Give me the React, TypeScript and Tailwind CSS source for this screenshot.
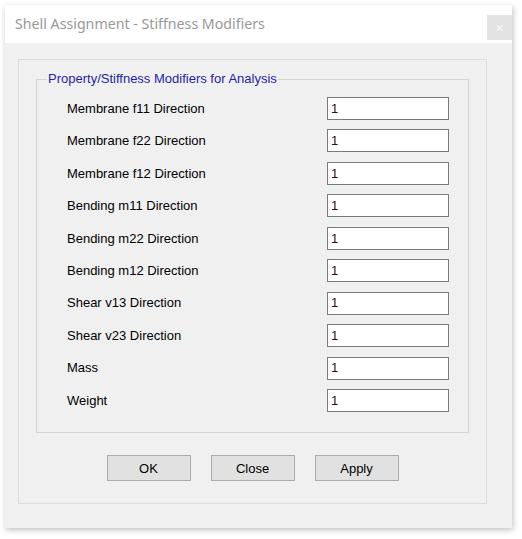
const rows = [
  "Membrane f11 Direction",
  "Membrane f22 Direction",
  "Membrane f12 Direction",
  "Bending m11 Direction",
  "Bending m22 Direction",
  "Bending m12 Direction",
  "Shear v13 Direction",
  "Shear v23 Direction",
  "Mass",
  "Weight",
];

function DialogButton({ label }: { label: string }) {
  return (
    <button
      type="button"
      className="w-[84px] h-[26px] bg-[#e1e1e1] border border-[#adadad] text-[13px] text-[#000] leading-none"
    >
      {label}
    </button>
  );
}

export default function App() {
  return (
    <div className="w-[522px] h-[539px] bg-white pt-[5px] pl-[5px] font-['Liberation_Sans',Arial,sans-serif]">
      <div className="w-[507px] h-[523px] flex flex-col shadow-[1px_2px_6px_rgba(0,0,0,0.25)]">
        {/* title bar */}
        <div className="h-[38px] bg-white flex justify-between items-start">
          <div className="pl-[10px] pt-[9px] text-[14.2px] text-[#999] font-['Noto_Sans',sans-serif] leading-[20px]">
            Shell Assignment - Stiffness Modifiers
          </div>
          <div className="mt-[10px] w-[25px] h-[25px] bg-[#e3e3e3] flex items-center justify-center text-[#f7f7f7] text-[14px] leading-none">
            ×
          </div>
        </div>

        {/* body */}
        <div className="flex-1 bg-[#f0f0f0] pt-[16px] pl-[13px]">
          <div className="w-[469px] h-[445px] border border-[#dcdcdc] pt-[19px] px-[17px]">
            <div className="relative h-[354px] border border-[#d5d5d5] pt-[17px] pl-[30px] pr-[19px]">
              <span className="absolute -top-[9px] left-[10px] px-[1px] bg-[#f0f0f0] text-[13px] leading-[16px] text-[#1f1fa8]">
                Property/Stiffness Modifiers for Analysis
              </span>
              <div className="flex flex-col gap-[9.44px]">
                {rows.map((r) => (
                  <div key={r} className="h-[23px] flex items-center justify-between">
                    <span className="text-[13px] text-[#000]">{r}</span>
                    <div className="w-[122px] h-[23px] bg-white border border-[#7a7a7a] flex items-center pl-[3px] text-[13px] text-[#2a1010]">
                      1
                    </div>
                  </div>
                ))}
              </div>
            </div>
            <div className="flex justify-center gap-[20px] mt-[22px]">
              <DialogButton label="OK" />
              <DialogButton label="Close" />
              <DialogButton label="Apply" />
            </div>
          </div>
        </div>
      </div>
    </div>
  );
}
